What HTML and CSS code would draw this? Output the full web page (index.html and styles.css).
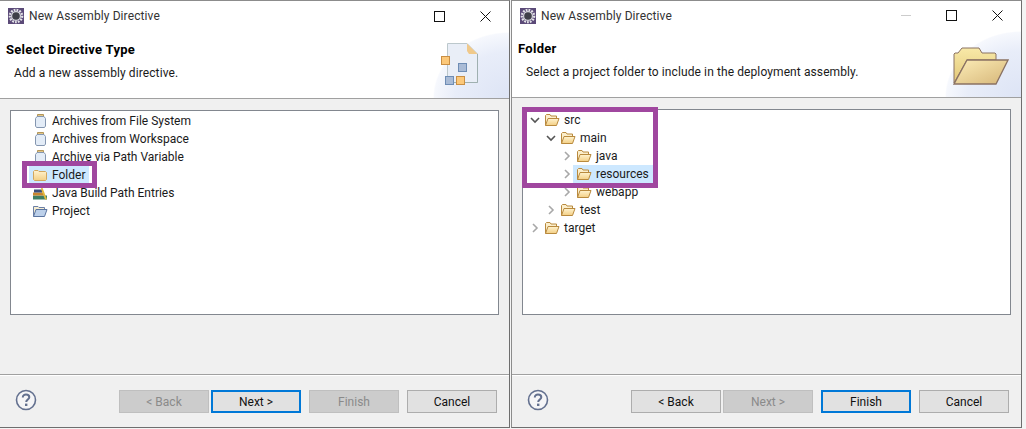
FILE: index.html
```html
<!DOCTYPE html>
<html lang="en">
<head>
  <meta charset="UTF-8" />
  <title>New Assembly Directive</title>
  <link rel="stylesheet" href="styles.css">
</head>
<body>

  <svg class="defs" width="0" height="0">
    <defs>
      <linearGradient id="folderFill" x1="0" y1="0" x2="0" y2="1">
        <stop offset="0" stop-color="#fff3cf"/>
        <stop offset="1" stop-color="#f3cf85"/>
      </linearGradient>
      <symbol id="openFolder" viewBox="0 0 16 14">
        <path d="M1.500 12.500V2.500L2.500 1.500H6L7 3H12.500V5" fill="#fbeecb" stroke="#b98a3e"/>
        <path d="M1.500 12.500L4 5.500H15L12.500 12.500Z" fill="url(#folderFill)" stroke="#b98a3e"/>
      </symbol>
      <symbol id="closedFolder" viewBox="0 0 16 14">
        <path d="M1.500 11.500V3.500L2.500 2.500H6L7 3.500H13.500L14.500 4.500V11.500L13.500 12.500H2.500Z" fill="url(#folderFill)" stroke="#d2a75e"/>
      </symbol>
      <symbol id="jar" viewBox="0 0 16 14">
        <path d="M5.500 0.500H11.500V2.500H5.500Z" fill="#e2c78a" stroke="#b3965a"/>
        <path d="M5 2.500L3.500 4.500V12L4.500 13.500H12.500L13.500 12V4.500L12 2.500Z" fill="#e3ecf7" stroke="#8496b0"/>
      </symbol>
      <symbol id="chevDown" viewBox="0 0 10 10">
        <path d="M1 3L5 7L9 3" fill="none" stroke="#555" stroke-width="1.600"/>
      </symbol>
      <symbol id="chevRight" viewBox="0 0 10 10">
        <path d="M3 1L7 5L3 9" fill="none" stroke="#a8a8a8" stroke-width="1.600"/>
      </symbol>
      <symbol id="appIcon" viewBox="0 0 16 16">
        <rect width="16" height="16" fill="#5b4a78"/>
        <circle cx="8" cy="8" r="6.200" fill="none" stroke="#e4e4e8" stroke-width="2.200" stroke-dasharray="1.800 1.100"/>
        <circle cx="8" cy="8" r="5" fill="#d8d8de"/>
        <circle cx="8" cy="8" r="3.800" fill="#3f3f48"/>
      </symbol>
      <symbol id="helpIcon" viewBox="0 0 22 22">
        <circle cx="11" cy="11" r="9.500" fill="#f5f5f7" stroke="#63708f" stroke-width="1.600"/>
        <path d="M7.800 8.400C7.800 6.600 9.200 5.600 11 5.600C12.900 5.600 14.300 6.700 14.300 8.300C14.300 10.400 11.200 10.600 11.200 13" fill="none" stroke="#63708f" stroke-width="2"/>
        <rect x="10" y="14.600" width="2.400" height="2.400" fill="#63708f"/>
      </symbol>
    </defs>
  </svg>

  <div class="stage">

    <!-- First wizard page -->
    <div class="dialog">
      <div class="titlebar">
        <svg class="app-icon"><use href="#appIcon"/></svg>
        <span class="title-text">New Assembly Directive</span>
        <span class="win-btns">
          <span class="win-min"></span>
          <span class="win-max"></span>
          <svg class="win-close" viewBox="0 0 11 11"><path d="M0.500 0.500L10.500 10.500M10.500 0.500L0.500 10.500" stroke="#111" fill="none"/></svg>
        </span>
      </div>
      <div class="banner">
        <div class="banner-text">
          <h1>Select Directive Type</h1>
          <p>Add a new assembly directive.</p>
        </div>
        <svg class="banner-doc" viewBox="0 0 40 44">
          <path d="M7.500 1.500H27L37.500 12V40.500H7.500Z" fill="#e9eef7" stroke="#bcc8cc"/>
          <path d="M27 1.500L37.500 12H29L27 9Z" fill="#f0c98a"/>
          <path d="M37.500 12V40.500H10" fill="none" stroke="#9fb0b0"/>
          <rect x="1.500" y="14.500" width="8" height="8" fill="#fcc879" stroke="#c98f45"/>
          <rect x="18.500" y="21.500" width="8" height="8" fill="#a9bbd6" stroke="#6e8db5"/>
          <rect x="5.500" y="34.500" width="8" height="8" fill="#a9bbd6" stroke="#6e8db5"/>
          <rect x="16.500" y="34.500" width="8" height="8" fill="#fcc879" stroke="#c98f45"/>
        </svg>
      </div>
      <div class="body">
        <div class="list-box">
          <div class="row"><svg class="row-icon"><use href="#jar"/></svg><span>Archives from File System</span></div>
          <div class="row"><svg class="row-icon"><use href="#jar"/></svg><span>Archives from Workspace</span></div>
          <div class="row"><svg class="row-icon"><use href="#jar"/></svg><span>Archive via Path Variable</span></div>
          <div class="row"><span class="selected"><svg class="row-icon"><use href="#closedFolder"/></svg><span>Folder</span></span></div>
          <div class="row">
            <svg class="row-icon" viewBox="0 0 16 14">
              <rect x="1" y="9.500" width="14" height="4" fill="#3f7f63"/>
              <rect x="1" y="6.500" width="11" height="3" fill="#c8862f"/>
              <rect x="2" y="3.500" width="8" height="3" fill="#3c4f7a"/>
              <path d="M10 0.500L15 13.500H13L9 3Z" fill="#e2b93e"/>
            </svg><span>Java Build Path Entries</span>
          </div>
          <div class="row">
            <svg class="row-icon" viewBox="0 0 16 14">
              <path d="M1.500 12.500V2.500H6L7 3.500H12.500V5" fill="#f5ecd0" stroke="#6b7fa5"/>
              <path d="M1.500 12.500L4 5.500H15L12.500 12.500Z" fill="#bcd0ea" stroke="#5a74a0"/>
            </svg><span>Project</span>
          </div>
        </div>
        <div class="highlight highlight-first"></div>
      </div>
      <div class="footer">
        <svg class="help"><use href="#helpIcon"/></svg>
        <div class="btn-group">
          <div class="nav-group">
            <button class="btn" disabled>&lt; Back</button>
            <button class="btn default">Next &gt;</button>
          </div>
          <button class="btn" disabled>Finish</button>
          <button class="btn">Cancel</button>
        </div>
      </div>
    </div>

    <!-- Second wizard page -->
    <div class="dialog dialog-second">
      <div class="titlebar">
        <svg class="app-icon"><use href="#appIcon"/></svg>
        <span class="title-text">New Assembly Directive</span>
        <span class="win-btns">
          <span class="win-min faded"></span>
          <span class="win-max"></span>
          <svg class="win-close" viewBox="0 0 11 11"><path d="M0.500 0.500L10.500 10.500M10.500 0.500L0.500 10.500" stroke="#111" fill="none"/></svg>
        </span>
      </div>
      <div class="banner">
        <div class="banner-text">
          <h1>Folder</h1>
          <p>Select a project folder to include in the deployment assembly.</p>
        </div>
        <svg class="banner-folder" viewBox="0 0 56 38">
          <defs>
            <linearGradient id="bigBack" x1="0" y1="0" x2="0" y2="1"><stop offset="0" stop-color="#f8e9a8"/><stop offset="1" stop-color="#e2c777"/></linearGradient>
            <linearGradient id="bigFront" x1="0" y1="0" x2="1" y2="1"><stop offset="0" stop-color="#fdeeb8"/><stop offset="1" stop-color="#d6b679"/></linearGradient>
          </defs>
          <path d="M1 36V7L2 6H5L9 1H26L29 6H42L43 7V13H14L1 36Z" fill="url(#bigBack)" stroke="#8a7263"/>
          <path d="M1 37L14 13H55L43 37Z" fill="url(#bigFront)" stroke="#8a7263" stroke-width="1.300"/>
        </svg>
      </div>
      <div class="body">
        <div class="list-box tree">
          <div class="row indent-0"><svg class="chev"><use href="#chevDown"/></svg><svg class="row-icon"><use href="#openFolder"/></svg><span>src</span></div>
          <div class="row indent-1"><svg class="chev"><use href="#chevDown"/></svg><svg class="row-icon"><use href="#openFolder"/></svg><span>main</span></div>
          <div class="row indent-2"><svg class="chev"><use href="#chevRight"/></svg><svg class="row-icon"><use href="#openFolder"/></svg><span>java</span></div>
          <div class="row indent-2"><svg class="chev"><use href="#chevRight"/></svg><span class="selected"><svg class="row-icon"><use href="#openFolder"/></svg><span>resources</span></span></div>
          <div class="row indent-2"><svg class="chev"><use href="#chevRight"/></svg><svg class="row-icon"><use href="#openFolder"/></svg><span>webapp</span></div>
          <div class="row indent-1"><svg class="chev"><use href="#chevRight"/></svg><svg class="row-icon"><use href="#openFolder"/></svg><span>test</span></div>
          <div class="row indent-0"><svg class="chev"><use href="#chevRight"/></svg><svg class="row-icon"><use href="#openFolder"/></svg><span>target</span></div>
        </div>
        <div class="highlight highlight-second"></div>
      </div>
      <div class="footer">
        <svg class="help"><use href="#helpIcon"/></svg>
        <div class="btn-group">
          <div class="nav-group">
            <button class="btn">&lt; Back</button>
            <button class="btn" disabled>Next &gt;</button>
          </div>
          <button class="btn default">Finish</button>
          <button class="btn">Cancel</button>
        </div>
      </div>
    </div>

  </div>

</body>
</html>
```

FILE: styles.css
```css
html, body {
  margin: 0;
  height: 100%;
  background: #f4f4f4;
  overflow: hidden;
}
.defs {
  position: absolute;
}
.stage {
  display: flex;
  width: 1026px;
  height: 429px;
  align-items: flex-start;
}
.dialog {
  width: 510px;
  height: 428px;
  box-sizing: border-box;
  background: #f0f0f0;
  border-top: 1px solid #8c8c8c;
  border-right: 1px solid #6e6e6e;
  border-bottom: 1px solid #6e6e6e;
  font-family: Roboto, "Noto Sans", sans-serif;
  font-size: 12px;
  color: #1a1a1a;
  display: flex;
  flex-direction: column;
}
.dialog-second {
  width: 511px;
  margin-left: 1px;
  border-left: 1px solid #8c8c8c;
}
.titlebar {
  height: 30px;
  background: #fff;
  display: flex;
  align-items: center;
  padding: 0 18px 0 8px;
  flex: none;
}
.dialog-second .titlebar {
  height: 29px;
}
.app-icon {
  width: 16px;
  height: 16px;
  margin-right: 5px;
}
.title-text {
  color: #333;
  letter-spacing: 0.1px;
}
.win-btns {
  margin-left: auto;
  display: flex;
  align-items: center;
  gap: 35px;
}
.win-min {
  width: 10px;
  height: 1px;
}
.win-min.faded {
  background: #ccc;
}
.win-max {
  width: 9px;
  height: 9px;
  border: 1px solid #111;
}
.win-close {
  width: 11px;
  height: 11px;
}
.banner {
  height: 68px;
  flex: none;
  box-sizing: border-box;
  border-bottom: 1px solid #a0a0a0;
  display: flex;
  justify-content: space-between;
  align-items: flex-start;
  padding: 10px 0 0 6px;
  background: radial-gradient(ellipse 76px 66px at 100% 100%, #dde4f5 0, #e8edf9 70%, #f6f8fd 98%, #fff 100%);
}
.banner h1 {
  font-size: 13px;
  font-weight: 700;
  letter-spacing: 0.3px;
  margin: 0;
  color: #000;
  line-height: 18px;
}
.banner p {
  margin: 6px 0 0 8px;
  line-height: 17px;
  letter-spacing: 0.1px;
}
.banner-doc {
  width: 40px;
  height: 44px;
  margin: 1px 29px 0 0;
}
.banner-folder {
  width: 56px;
  height: 38px;
  margin: 7px 12px 0 0;
}
.body {
  position: relative;
  height: 276px;
  flex: none;
  box-sizing: border-box;
  border-bottom: 1px solid #a0a0a0;
  box-shadow: 0 1px 0 #fff;
  padding: 11px 10px 0 10px;
}
.dialog-second .body {
  height: 277px;
}
.list-box {
  height: 205px;
  box-sizing: border-box;
  background: #fff;
  border: 1px solid #82878f;
  padding-top: 1px;
}
.list-box.tree {
  height: 206px;
}
.row {
  height: 18px;
  display: flex;
  align-items: center;
  padding-left: 21px;
  white-space: nowrap;
}
.row-icon {
  width: 16px;
  height: 14px;
  margin-right: 4px;
  flex: none;
}
.selected {
  display: flex;
  align-items: center;
  box-sizing: border-box;
  background: #cde8ff;
  height: 18px;
  padding: 2px 4px 0 3px;
  margin: -2px 0 0 -3px;
}
.tree .selected {
  padding-top: 0;
  margin-top: 0;
}
.tree .row {
  padding-left: 0;
}
.chev {
  width: 10px;
  height: 10px;
  margin-right: 4px;
  flex: none;
}
.indent-0 {
  margin-left: 7px;
}
.indent-1 {
  margin-left: 23px;
}
.indent-2 {
  margin-left: 39px;
}
.highlight {
  position: absolute;
  box-sizing: border-box;
  border: 5px solid #a0479f;
}
.highlight-first {
  left: 22px;
  top: 62px;
  width: 75px;
  height: 27px;
}
.highlight-second {
  left: 10px;
  top: 9px;
  width: 136px;
  height: 81px;
}
.footer {
  height: 52px;
  flex: none;
  display: flex;
  align-items: flex-start;
  padding: 14px 12px 0 15px;
  box-sizing: border-box;
  justify-content: space-between;
}
.help {
  width: 22px;
  height: 22px;
}
.btn-group {
  display: flex;
  gap: 8px;
  padding-top: 1px;
}
.nav-group {
  display: flex;
  gap: 2px;
}
.btn {
  width: 90px;
  height: 23px;
  box-sizing: border-box;
  background: #e1e1e1;
  border: 1px solid #adadad;
  font-family: inherit;
  font-size: 12px;
  color: #111;
  padding: 0;
}
.btn:disabled {
  background: #ccc;
  border-color: #bfbfbf;
  color: #8a8a8a;
}
.btn.default {
  border: 2px solid #0078d7;
}
```
